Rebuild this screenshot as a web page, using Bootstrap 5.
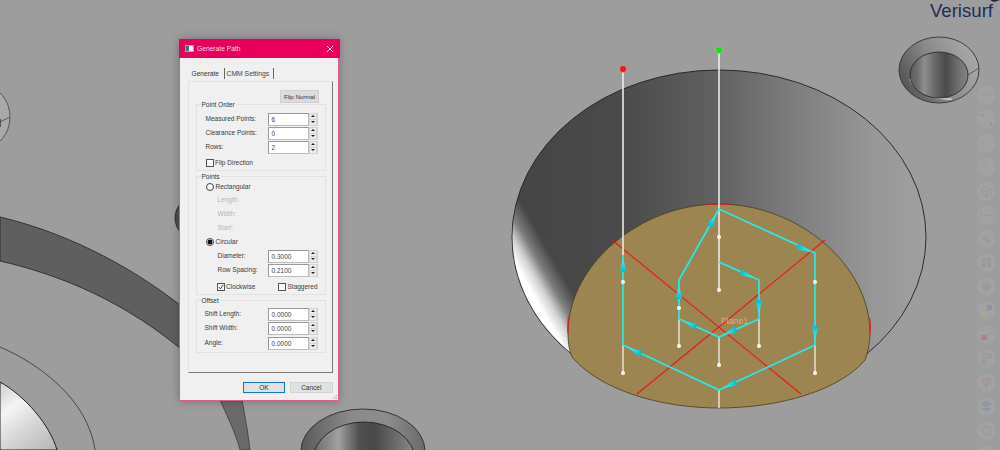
<!DOCTYPE html>
<html lang="en">
<head>
<meta charset="utf-8">
<title>Generate Path</title>
<link href="https://cdn.jsdelivr.net/npm/bootstrap@5.3.0/dist/css/bootstrap.min.css" rel="stylesheet">
<style>
html,body{margin:0;background:#9d9d9d;overflow:hidden}
.stage{width:1000px;height:450px;overflow:hidden;background:#9d9d9d}
.canvas{left:0;top:0;width:1000px;height:450px}
.brand{right:7px;top:-1px;font:18.6px/24px "Liberation Sans",Arial,sans-serif;color:#1b2d57}
.tools{left:977px;top:86px;gap:4.93px}
.tool{width:19px;height:19px;background:rgba(255,255,255,.05);flex:none}
.tool svg{display:block;opacity:.24}
.dlg{left:179px;top:39px;width:160px;height:362px;background:#f0f0f0;border:1.5px solid #e3568f;border-top:0;box-shadow:0 0 9px rgba(0,0,0,.28);font:6.5px/14px "Liberation Sans",Arial,sans-serif;color:#3a3a3a}
.dlg-title{height:19px;background:#ea005c;margin:0 -1.5px;padding:0 6px 0 6.5px;font-size:6.7px;color:#fde}
.dlg-ico{width:9px;height:7px;background:linear-gradient(90deg,#2f7f78 0 45%,#f4f4f4 45%);border:.5px solid #9ab;margin-right:3px}
.dlg-x{width:8px;height:8px}
.tabs{height:23px;padding:10px 0 0 11.5px;line-height:12px;font-size:6.6px}
.tab-on{color:#333;width:32px;flex:none}
.tab-off{padding:0 2px;border-left:1.3px solid #666;border-right:1.3px solid #666;height:11px;line-height:11px;color:#444;font-size:6.8px;width:50px;flex:none}
.panel{margin:0 5.5px 0 7.5px;height:292px;padding:8px 6px 0 7px;border:1px solid #e2e2e2;border-right:1.5px solid #777;border-bottom:1.5px solid #777}
.flip{width:39px;height:13px;line-height:12px;background:#dcdcdc;border:1px solid #cfcfcf;font-size:6.1px;text-align:center;color:#333;margin:0 6.5px 1px auto}
.grp{border:1px solid #e2e2e2;margin-bottom:5px}
.grp-a{height:67px;padding:7px 0 0 9px}
.grp-b{height:119px;padding:4px 0 0 9px}
.grp-c{height:53px;padding:6px 0 0 8px}
.lgd{height:8px;line-height:8px;background:#f0f0f0;padding:0 1px;width:max-content;color:#333}
.grp-a .lgd{margin:-11px 0 3px -5px}
.grp-b .lgd{margin:-8px 0 0 -5px}
.grp-c .lgd{margin:-10px 0 2px -4px}
.rw{height:14px}
.rw-short{height:12px}
.rw-drop{margin-top:3px}
.rw-nudge{margin-top:1px}
.lbl-a{width:62px}
.lbl-b{width:50px;margin-left:12px}
.lbl-c{width:63px}
.muted-lbl{margin-left:12px;color:#b4b4b4;height:14px}
.field{width:41px;height:13px;line-height:11px;background:#fff;border:1px solid #bdbdbd;border-top-color:#999;border-left-color:#999;padding-left:3px;color:#444}
.spin{width:9px;height:13px;background:#d6d6d6;padding:1px 1.5px;gap:1px}
.spin i{display:block;flex:1;background:#ececec;position:relative}
.spin i::after{content:"";position:absolute;left:1px;top:1.2px;border-left:2px solid transparent;border-right:2px solid transparent}
.spin .up::after{border-bottom:2.4px solid #222}
.spin .dn::after{border-top:2.4px solid #222}
.chk{width:8px;height:8px;border:1px solid #555;background:#fafafa;margin-right:1.5px;flex:none}
.chk svg{display:block}
.chk-in{margin-left:11px}
.end-gap{margin-right:7px}
.rad{width:8.5px;height:8.5px;border:1px solid #444;background:#fafafa;margin-right:1.5px;flex:none}
.rad-on{background:radial-gradient(circle,#111 0 2.2px,#fafafa 2.7px)}
.foot{padding:8.5px 5px 0 63px;gap:5px}
.pbtn{height:11.5px;line-height:9.5px;width:42.5px;background:#e1e1e1;border:1px solid #d2d2d2;text-align:center;color:#333}
.pbtn-ok{border:1.3px solid #0a78d4;width:42px}
.grip{right:1px;bottom:1px;width:6px;height:6px;background:repeating-linear-gradient(135deg,transparent 0 1px,#bbb 1px 2px);clip-path:polygon(100% 0,100% 100%,0 100%)}
</style>
</head>
<body>
<div class="stage position-relative">
<svg class="canvas position-absolute" viewBox="0 0 1000 450" xmlns="http://www.w3.org/2000/svg">
<defs>
<linearGradient id="wall" gradientUnits="userSpaceOnUse" x1="513" y1="0" x2="926" y2="0">
<stop offset="0" stop-color="#454545"/><stop offset=".26" stop-color="#4a4a4a"/><stop offset=".5" stop-color="#626262"/><stop offset=".7" stop-color="#808080"/><stop offset=".88" stop-color="#989898"/><stop offset="1" stop-color="#a0a0a0"/>
</linearGradient>
<linearGradient id="glare" gradientUnits="userSpaceOnUse" x1="536" y1="299" x2="566" y2="282">
<stop offset="0" stop-color="#fff"/><stop offset=".3" stop-color="#fff" stop-opacity=".75"/><stop offset=".6" stop-color="#fff" stop-opacity=".3"/><stop offset="1" stop-color="#fff" stop-opacity="0"/>
</linearGradient>
<linearGradient id="smallwall" x1="0" y1=".6" x2="1" y2=".2">
<stop offset="0" stop-color="#555"/><stop offset=".45" stop-color="#8a8a8a"/><stop offset="1" stop-color="#adadad"/>
</linearGradient>
<linearGradient id="smallcyl" x1="0" x2="1" y1="0" y2="0">
<stop offset="0" stop-color="#5c5c5c"/><stop offset=".12" stop-color="#6c6c6c"/><stop offset=".25" stop-color="#8e8e8e"/><stop offset=".45" stop-color="#646464"/><stop offset=".62" stop-color="#4a4a4a"/><stop offset=".85" stop-color="#727272"/><stop offset="1" stop-color="#858585"/>
</linearGradient>
<linearGradient id="botwall" x1="0" x2="1" y1="0" y2="0">
<stop offset="0" stop-color="#5a5a5a"/><stop offset=".4" stop-color="#8a8a8a"/><stop offset=".7" stop-color="#8c8c8c"/><stop offset="1" stop-color="#6a6a6a"/>
</linearGradient>
<linearGradient id="botcyl" x1="0" x2="1" y1="0" y2="0">
<stop offset="0" stop-color="#6a6a6a"/><stop offset=".25" stop-color="#a0a0a0"/><stop offset=".45" stop-color="#505050"/><stop offset=".6" stop-color="#484848"/><stop offset="1" stop-color="#8a8a8a"/>
</linearGradient>
<linearGradient id="shine" gradientUnits="userSpaceOnUse" x1="0" y1="385" x2="50" y2="450">
<stop offset="0" stop-color="#d0d0d0"/><stop offset=".3" stop-color="#f5f5f5"/><stop offset=".6" stop-color="#d8d8d8"/><stop offset="1" stop-color="#b8b8b8"/>
</linearGradient>
<linearGradient id="arfill" gradientUnits="userSpaceOnUse" x1="-7" y1="0" x2="7" y2="0">
<stop offset="0" stop-color="#16b4c0"/><stop offset=".5" stop-color="#1fdfe4"/><stop offset="1" stop-color="#30f6f6"/>
</linearGradient>
<polygon id="ar" points="-7,-3.5 7,0 -7,3.5" fill="url(#arfill)"/>
</defs>

<!-- left-hand part features -->
<ellipse cx="-15" cy="117" rx="25" ry="30" fill="#a9a9a9" stroke="#444" stroke-width=".8"/>
<path d="M10 117 L0 122" stroke="#444" stroke-width=".8" fill="none"/>
<path d="M0 119V127" stroke="#222" stroke-width="1.2"/>
<path d="M0 217 C60 231 125 262 180 305 L181 349 C125 303 65 276 0 261Z" fill="#5f5f5f" stroke="#222" stroke-width=".8"/>
<path d="M220 400 C228 418 236 434 240 450 L250 450 C248 432 245 416 242 400Z" fill="#6a6a6a" stroke="#333" stroke-width=".7"/>
<path d="M0 347 C40 364 88 400 95 450" fill="none" stroke="#333" stroke-width=".8"/>
<path d="M0 382 C25 396 50 425 57 450 L0 450Z" fill="url(#shine)" stroke="#111" stroke-width=".9"/>
<ellipse cx="198" cy="218" rx="23" ry="22" fill="#505050" stroke="#222" stroke-width=".8"/>

<!-- small hole top right -->
<ellipse cx="939" cy="70" rx="40" ry="33" fill="url(#smallwall)" stroke="#333" stroke-width=".9"/>
<path d="M910 79 C914 90 930 100 952 99" fill="none" stroke="#e8e8e8" stroke-width="1.2"/>
<ellipse cx="939" cy="75" rx="29" ry="23" fill="url(#smallcyl)" stroke="#2a2a2a" stroke-width=".9"/>
<path d="M968 75 L979 68" stroke="#444" stroke-width=".8"/>
<path d="M994 2 L1000 0 L990 0Z" fill="#223"/>

<!-- bottom hole -->
<ellipse cx="363" cy="451" rx="62" ry="42" fill="url(#botwall)" stroke="#2a2a2a" stroke-width=".9"/>
<ellipse cx="364" cy="460" rx="51" ry="38" fill="url(#botcyl)" stroke="#222" stroke-width=".9"/>

<!-- large hole -->
<ellipse cx="719" cy="237" rx="207" ry="167" fill="url(#wall)" stroke="#1f1f1f" stroke-width=".9"/>
<ellipse cx="719" cy="237" rx="206.5" ry="166.5" fill="url(#glare)"/>
<path d="M719 204 C640 204 568 265 568 333 C568 345 570 352 572 357 C600 390 660 408 719 408 C780 408 840 390 865 360 C868 352 870 342 870 333 C870 265 798 204 719 204Z" fill="#9c8550" stroke="#4a3c1c" stroke-width=".8"/>
<path d="M612 240 L801 394 M825 240 L637 394" stroke="#f01414" stroke-width="1.1" fill="none"/>
<path d="M708 204.2 Q719 203.6 730 204.2 M568.3 317 Q567.7 325 568 333 M869.7 318 Q870.3 325 870 333" stroke="#f01414" stroke-width="1.2" fill="none"/>

<!-- probe stems -->
<g stroke="#ecebe8" stroke-width="1.6" fill="none">
<path d="M623 72V255"/>
<path d="M719 53V289.5"/>
</g>
<g stroke="#e6dacb" stroke-width="1.6" fill="none">
<path d="M623 345V373"/><path d="M679 319V346"/><path d="M759 319V346"/><path d="M815 345V373"/><path d="M719 337V365"/><path d="M719 390V408"/>
</g>
<!-- cyan path -->
<path d="M623 255V345L719 390L815 345V253L719 209L679 280V319L719 337L759 319V280L719 262" fill="none" stroke="#22ecee" stroke-width="1.7" stroke-linejoin="miter"/>
<use href="#ar" transform="translate(623 265) rotate(-90)"/>
<use href="#ar" transform="translate(635 351) rotate(205)"/>
<use href="#ar" transform="translate(730 385) rotate(155)"/>
<use href="#ar" transform="translate(815 333) rotate(90)"/>
<use href="#ar" transform="translate(804 249) rotate(24.6)"/>
<use href="#ar" transform="translate(713 220) rotate(-60.6)"/>
<use href="#ar" transform="translate(679 292) rotate(-90)"/>
<use href="#ar" transform="translate(690 324) rotate(204)"/>
<use href="#ar" transform="translate(730 332) rotate(156)"/>
<use href="#ar" transform="translate(759 307) rotate(90)"/>
<use href="#ar" transform="translate(747 275) rotate(24)"/>
<!-- points -->
<g fill="#fff">
<circle cx="623" cy="282" r="2"/><circle cx="623" cy="373" r="2"/>
<circle cx="719" cy="237" r="2"/><circle cx="719" cy="290" r="2"/><circle cx="719" cy="365" r="2"/>
<circle cx="679" cy="308" r="2"/><circle cx="679" cy="346" r="2"/>
<circle cx="759" cy="346" r="2"/>
<circle cx="815" cy="282" r="2"/><circle cx="815" cy="373" r="2"/>
</g>
<circle cx="623" cy="69" r="3.6" fill="#f01818" stroke="#b8b8b8" stroke-width=".6"/>
<circle cx="719" cy="50" r="3.6" fill="#18e018" stroke="#b8b8b8" stroke-width=".6"/>
<text x="721" y="324" font-family="Liberation Sans, Arial, sans-serif" font-size="8.7" fill="#dcaa90">Plane1</text>
</svg>

<div class="brand position-absolute">Verisurf</div>

<div class="tools position-absolute d-flex flex-column">
<div class="tool rounded-circle"><svg width="19" height="19" viewBox="0 0 19 19"><path d="M9.5 4v11M4 9.5h11" stroke="#6f8fb0" stroke-width="1.4"/></svg></div>
<div class="tool rounded-circle"><svg width="19" height="19" viewBox="0 0 19 19"><path d="M5 5l9 9" stroke="#6f8fb0" stroke-width="1"/><circle cx="5" cy="5" r="1" fill="#456"/><circle cx="14" cy="14" r="1" fill="#456"/></svg></div>
<div class="tool rounded-circle"><svg width="19" height="19" viewBox="0 0 19 19"><circle cx="9.5" cy="9.5" r="5" fill="none" stroke="#6f8fb0" stroke-width="1"/></svg></div>
<div class="tool rounded-circle"><svg width="19" height="19" viewBox="0 0 19 19"><path d="M7 3c5 3-2 6 2 8 3 1 3 3 2 5" fill="none" stroke="#6f8fb0" stroke-width="1"/></svg></div>
<div class="tool rounded-circle"><svg width="19" height="19" viewBox="0 0 19 19"><path d="M9.5 4l5 3v5l-5 3-5-3V7z M9.5 9l5-2M9.5 9l-5-2M9.5 9v6" fill="none" stroke="#6f7f90" stroke-width="1"/></svg></div>
<div class="tool rounded-circle"><svg width="19" height="19" viewBox="0 0 19 19"><path d="M4 4v11M15 4v11M4 9.5h11" fill="none" stroke="#5f8fb5" stroke-width="1"/></svg></div>
<div class="tool rounded-circle"><svg width="19" height="19" viewBox="0 0 19 19"><path d="M5 6l5 1 4 4-3 3-3-4-3-1z" fill="#b08040"/></svg></div>
<div class="tool rounded-circle"><svg width="19" height="19" viewBox="0 0 19 19"><rect x="5" y="5" width="9" height="9" fill="#7a8088"/><path d="M5 9.5h9M9.5 5v9" stroke="#aaa" stroke-width=".8"/></svg></div>
<div class="tool rounded-circle"><svg width="19" height="19" viewBox="0 0 19 19"><rect x="6" y="6" width="7" height="7" fill="#a08050"/><path d="M4 9.5h11M9.5 4v11" stroke="#807050" stroke-width=".8"/></svg></div>
<div class="tool rounded-circle"><svg width="19" height="19" viewBox="0 0 19 19"><rect x="10" y="4" width="5" height="5" fill="#7050c0"/><rect x="4" y="10" width="5" height="5" fill="#c8b060"/><path d="M9 10l1-1" stroke="#555"/></svg></div>
<div class="tool rounded-circle"><svg width="19" height="19" viewBox="0 0 19 19"><rect x="4" y="10" width="6" height="5" fill="#f02020"/><rect x="10" y="4" width="5" height="5" fill="none" stroke="#c08040"/></svg></div>
<div class="tool rounded-circle"><svg width="19" height="19" viewBox="0 0 19 19"><path d="M6 4h3v5H6zM11 5h3v4h-3zM6 11h3v4H6z" fill="none" stroke="#6f7f90"/></svg></div>
<div class="tool rounded-circle"><svg width="19" height="19" viewBox="0 0 19 19"><path d="M4 6h11M9.5 6v9" stroke="#a05060" stroke-width="1.2"/><rect x="6" y="7" width="7" height="4" fill="none" stroke="#b06070"/></svg></div>
<div class="tool rounded-circle"><svg width="19" height="19" viewBox="0 0 19 19"><path d="M9.5 4l5 3-5 3-5-3zM4.500 11l5 3 5-3" fill="#5078a8" stroke="#5078a8"/></svg></div>
<div class="tool rounded-circle"><svg width="19" height="19" viewBox="0 0 19 19"><circle cx="9.5" cy="9.500" r="4" fill="none" stroke="#b07840" stroke-width="1.5"/></svg></div>
<div class="tool rounded-circle"></div>
</div>

<div class="dlg position-absolute d-flex flex-column">
<div class="dlg-title d-flex align-items-center">
<span class="dlg-ico"></span><span class="flex-grow-1">Generate Path</span>
<svg class="dlg-x" viewBox="0 0 8 8"><path d="M1 1l6 6M7 1L1 7" stroke="#fff" stroke-width=".9"/></svg>
</div>
<div class="tabs d-flex">
<div class="tab-on">Generate</div>
<div class="tab-off">CMM Settings</div>
</div>
<div class="panel">
<div class="flip">Flip Normal</div>
<div class="grp grp-a">
<div class="lgd">Point Order</div>
<div class="rw d-flex align-items-center"><span class="lbl-a">Measured Points:</span><div class="field">6</div><div class="spin d-flex flex-column"><i class="up"></i><i class="dn"></i></div></div>
<div class="rw d-flex align-items-center"><span class="lbl-a">Clearance Points:</span><div class="field">0</div><div class="spin d-flex flex-column"><i class="up"></i><i class="dn"></i></div></div>
<div class="rw d-flex align-items-center"><span class="lbl-a">Rows:</span><div class="field">2</div><div class="spin d-flex flex-column"><i class="up"></i><i class="dn"></i></div></div>
<div class="rw d-flex align-items-center pt-1"><span class="chk"></span><span>Flip Direction</span></div>
</div>
<div class="grp grp-b">
<div class="lgd">Points</div>
<div class="rw-short d-flex align-items-center"><span class="rad rounded-circle"></span><span>Rectangular</span></div>
<div class="muted-lbl">Length:</div>
<div class="muted-lbl">Width:</div>
<div class="muted-lbl">Start:</div>
<div class="rw d-flex align-items-center"><span class="rad rad-on rounded-circle"></span><span>Circular</span></div>
<div class="rw d-flex align-items-center"><span class="lbl-b">Diameter:</span><div class="field">0.3000</div><div class="spin d-flex flex-column"><i class="up"></i><i class="dn"></i></div></div>
<div class="rw d-flex align-items-center"><span class="lbl-b">Row Spacing:</span><div class="field">0.2100</div><div class="spin d-flex flex-column"><i class="up"></i><i class="dn"></i></div></div>
<div class="rw rw-drop d-flex align-items-center">
<span class="chk chk-in"><svg width="6" height="6" viewBox="0 0 6 6"><path d="M.8 3l1.6 1.8L5.300 .8" fill="none" stroke="#333" stroke-width=".9"/></svg></span><span>Clockwise</span>
<span class="chk ms-auto"></span><span class="end-gap">Staggered</span>
</div>
</div>
<div class="grp grp-c">
<div class="lgd">Offset</div>
<div class="rw d-flex align-items-center"><span class="lbl-c">Shift Length:</span><div class="field">0.0000</div><div class="spin d-flex flex-column"><i class="up"></i><i class="dn"></i></div></div>
<div class="rw d-flex align-items-center"><span class="lbl-c">Shift Width:</span><div class="field">0.0000</div><div class="spin d-flex flex-column"><i class="up"></i><i class="dn"></i></div></div>
<div class="rw rw-nudge d-flex align-items-center"><span class="lbl-c">Angle:</span><div class="field">0.0000</div><div class="spin d-flex flex-column"><i class="up"></i><i class="dn"></i></div></div>
</div>
</div>
<div class="foot d-flex">
<div class="pbtn pbtn-ok">OK</div>
<div class="pbtn">Cancel</div>
</div>
<div class="grip position-absolute"></div>
</div>
</div>
<script src="https://cdn.jsdelivr.net/npm/bootstrap@5.3.0/dist/js/bootstrap.bundle.min.js"></script>
</body>
</html>
